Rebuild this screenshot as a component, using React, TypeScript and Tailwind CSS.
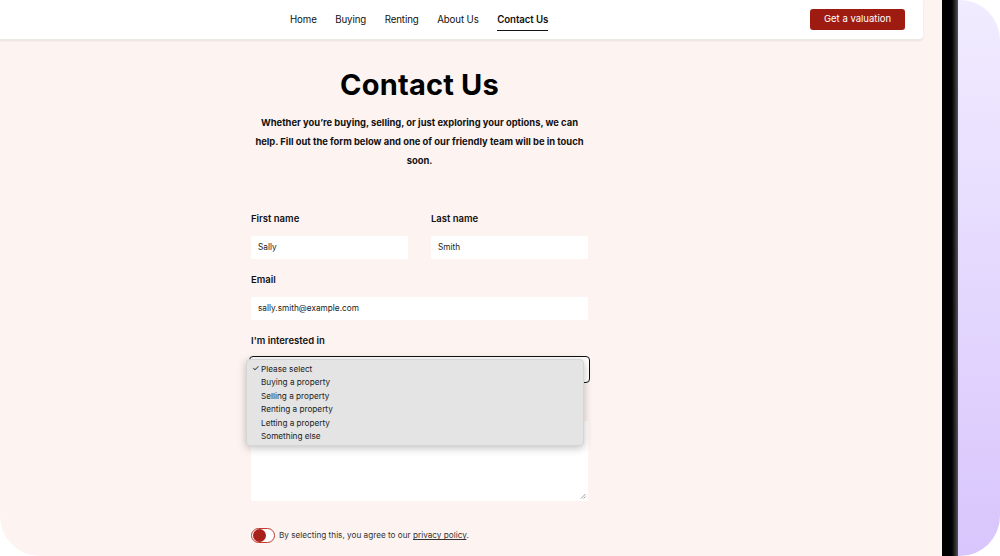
const navItems = ['Home', 'Buying', 'Renting', 'About Us', 'Contact Us'];

const options = [
  'Please select',
  'Buying a property',
  'Selling a property',
  'Renting a property',
  'Letting a property',
  'Something else',
];

function Label({ children }: { children: React.ReactNode }) {
  return <label className="block h-[12px] text-[9.5px] font-semibold text-[#111] leading-[12px]">{children}</label>;
}

function Field({ label, value, className = '' }: { label: string; value: string; className?: string }) {
  return (
    <div className={className}>
      <Label>{label}</Label>
      <div className="mt-[11px] h-[23px] bg-white rounded-[2px] px-[7px] flex items-center text-[8.25px] text-[#222]">
        {value}
      </div>
    </div>
  );
}

export default function App() {
  return (
    <div className="w-[1000px] h-[556px] bg-white flex overflow-hidden font-['Inter',sans-serif]">
      {/* page */}
      <div className="w-[942px] h-full bg-[#fdf3f1] rounded-bl-[40px] flex flex-col">
        <header className="w-[923px] h-[40px] shrink-0 bg-white rounded-br-[4px] shadow-[0_1px_2px_rgba(0,0,0,0.08)] border-b border-[#ece8e4] flex items-center">
          <nav className="ml-[290px] mt-[2px] flex items-center gap-[18.5px] text-[9.7px] tracking-[-0.1px] text-[#111]">
            {navItems.map((item) => (
              <a
                key={item}
                className={
                  item === 'Contact Us'
                    ? 'font-semibold border-b-[1.5px] border-[#111] pt-[3px] pb-[2px]'
                    : 'py-[3px]'
                }
              >
                {item}
              </a>
            ))}
          </nav>
          <button className="ml-auto mr-[18px] h-[21px] w-[95px] bg-[#9e1b12] text-white text-[9.5px] rounded-[3px]">
            Get a valuation
          </button>
        </header>

        <main className="w-[839px] flex flex-col items-center">
          <h1 className="mt-[26px] text-[29px] font-bold text-black leading-[38px] tracking-[0.2px]">Contact Us</h1>
          <p className="mt-[9px] w-[337px] text-center text-[9.4px] font-bold leading-[19px] text-[#111]">
            Whether you’re buying, selling, or just exploring your options, we can help. Fill out the form below and
            one of our friendly team will be in touch soon.
          </p>

          <form className="mt-[43px] w-[337px] flex flex-col">
            <div className="flex gap-[23px]">
              <Field label="First name" value="Sally" className="flex-1" />
              <Field label="Last name" value="Smith" className="flex-1" />
            </div>
            <Field label="Email" value="sally.smith@example.com" className="mt-[15px]" />

            <div className="mt-[15px] relative">
              <Label>I'm interested in</Label>
              <div className="mt-[9px] -mx-[2px] h-[27px] rounded-[4px] border-[1.5px] border-[#111] bg-white" />
              {/* open native menu */}
              <div className="absolute left-[-5px] top-[24px] w-[338px] bg-[#e3e4e3] rounded-[4px] shadow-[0_2px_8px_rgba(0,0,0,0.25)] border border-[#d4d5d4] py-[2px] z-10">
                {options.map((opt, i) => (
                  <div key={opt} className="h-[13.5px] flex items-center text-[8.2px] text-[#222]">
                    <span className="w-[14px] pl-[5px] text-[8.5px]">{i === 0 ? '✓' : ''}</span>
                    {opt}
                  </div>
                ))}
              </div>
            </div>

            <div className="mt-[15px]">
              {/* message label sits behind the open menu */}
              <div className="h-[12px]" />
              <div className="mt-[11px] relative h-[80px] bg-white rounded-[2px]">
                <svg className="absolute right-[2px] bottom-[2px]" width="6" height="6" viewBox="0 0 6 6">
                  <path d="M1 5.5 L5.5 1 M3.5 5.5 L5.5 3.5" stroke="#888" strokeWidth="0.8" />
                </svg>
              </div>
            </div>

            <div className="mt-[27px] flex items-center gap-[4px]">
              <div className="w-[24px] h-[15px] rounded-full border border-[#c0392b] bg-white flex items-center px-[1px]">
                <div className="w-[13px] h-[13px] rounded-full bg-[#a8201a]" />
              </div>
              <span className="text-[8.2px] text-[#333]">
                By selecting this, you agree to our <span className="underline">privacy policy</span>.
              </span>
            </div>
          </form>
        </main>
      </div>

      {/* dark divider */}
      <div className="w-[16px] h-full bg-gradient-to-r from-black via-black to-[#555]" />

      {/* side panel */}
      <div className="flex-1 h-full rounded-r-[40px] bg-gradient-to-b from-[#f1ecff] to-[#d8c5fc]" />
    </div>
  );
}
